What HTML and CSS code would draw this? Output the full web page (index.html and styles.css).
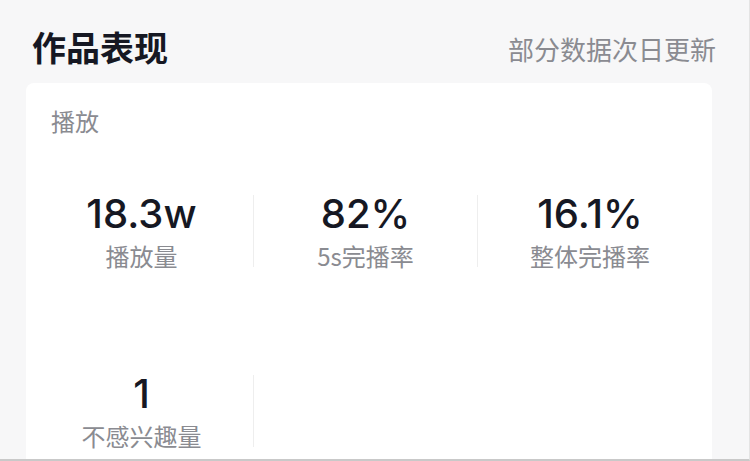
FILE: index.html
```html
<!DOCTYPE html>
<html lang="zh-CN">
<head>
<meta charset="utf-8">
<title>作品表现</title>
<link rel="stylesheet" href="styles.css">
</head>
<body>
<div class="page">
  <header class="head">
    <h1 class="title">作品表现</h1>
    <span class="note">部分数据次日更新</span>
  </header>
  <section class="card">
    <div class="card-label">播放</div>
    <div class="grid">
      <div class="cell">
        <div class="num">18.3w</div>
        <div class="lab">播放量</div>
      </div>
      <div class="cell">
        <div class="num">82%</div>
        <div class="lab">5s完播率</div>
      </div>
      <div class="cell">
        <div class="num">16.1%</div>
        <div class="lab">整体完播率</div>
      </div>
      <div class="cell">
        <div class="num">1</div>
        <div class="lab">不感兴趣量</div>
      </div>
    </div>
  </section>
</div>
</body>
</html>
```
FILE: styles.css
```css
html, body {
  margin: 0;
  padding: 0;
  background: #f7f7f8;
}
body {
  font-family: "Inter", "Noto Sans CJK SC", sans-serif;
  color: #161823;
  width: 750px;
  height: 461px;
  overflow: hidden;
  box-sizing: border-box;
  border-right: 1px solid #e4e4e4;
  border-bottom: 2px solid #c9c9c9;
}
.page {
  padding: 0 33px 0 26px;
}
.head {
  display: flex;
  justify-content: space-between;
  align-items: center;
  height: 83px;
  padding-left: 6px;
}
.title {
  margin: 0;
  font-family: "Noto Sans CJK SC", sans-serif;
  font-size: 34px;
  font-weight: 700;
  line-height: 40px;
  color: #161823;
  padding-top: 10px;
}
.note {
  font-family: "Noto Sans CJK SC", sans-serif;
  font-size: 26px;
  line-height: 34px;
  color: #8a8b91;
  padding-top: 14px;
}
.card {
  background: #fff;
  border-radius: 8px 8px 0 0;
  width: 686px;
  height: 400px;
  padding-top: 24px;
  box-sizing: border-box;
}
.card-label {
  font-family: "Noto Sans CJK SC", sans-serif;
  font-size: 24px;
  line-height: 28px;
  color: #8a8b91;
  padding-left: 25px;
}
.grid {
  display: grid;
  grid-template-columns: repeat(3, 224px);
  row-gap: 108px;
  margin-top: 60px;
  margin-left: 4px;
}
.cell {
  height: 72px;
  display: flex;
  flex-direction: column;
  align-items: center;
  border-right: 1px solid #eeeeee;
}
.cell:nth-child(3n) {
  border-right: none;
}
.num {
  font-family: "Inter", sans-serif;
  font-size: 40px;
  font-weight: 500;
  line-height: 40px;
  color: #161823;
  margin-top: -1px;
}
.lab {
  font-family: "Noto Sans CJK SC", sans-serif;
  font-size: 24px;
  line-height: 30px;
  color: #8a8b91;
  margin-top: 7px;
}
```
